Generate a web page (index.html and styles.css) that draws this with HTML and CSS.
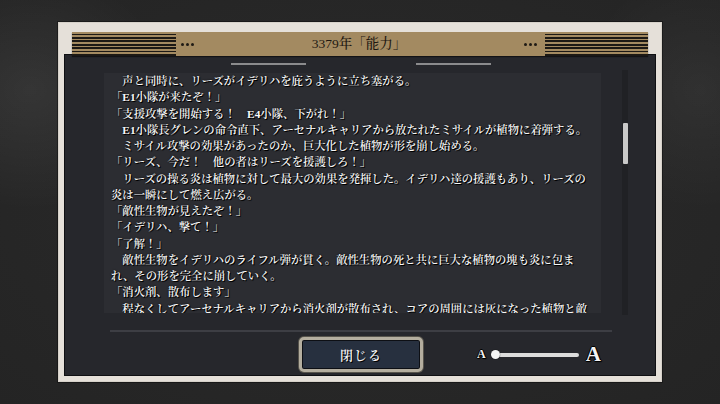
FILE: index.html
```html
<!DOCTYPE html>
<html lang="ja">
<head>
<meta charset="utf-8">
<title>ログ</title>
<link rel="stylesheet" href="styles.css">
</head>
<body>
<div class="frame">
  <header class="header">
    <div class="stripes"></div>
    <span class="dots dots-left"><i></i><i></i><i></i></span>
    <h1 class="title">3379年「能力」</h1>
    <span class="dots dots-right"><i></i><i></i><i></i></span>
    <div class="stripes stripes-right"></div>
  </header>
  <section class="panel">
    <div class="tabs"><span class="tab-line"></span><span class="tab-line tab-line-2"></span></div>
    <div class="log-row">
      <div class="log">
        <p>　声と同時に、リーズがイデリハを庇うように立ち塞がる。</p>
        <p>「E1小隊が来たぞ！」</p>
        <p>「支援攻撃を開始する！　E4小隊、下がれ！」</p>
        <p>　E1小隊長グレンの命令直下、アーセナルキャリアから放たれたミサイルが植物に着弾する。</p>
        <p>　ミサイル攻撃の効果があったのか、巨大化した植物が形を崩し始める。</p>
        <p>「リーズ、今だ！　他の者はリーズを援護しろ！」</p>
        <p>　リーズの操る炎は植物に対して最大の効果を発揮した。イデリハ達の援護もあり、リーズの炎は一瞬にして燃え広がる。</p>
        <p>「敵性生物が見えたぞ！」</p>
        <p>「イデリハ、撃て！」</p>
        <p>「了解！」</p>
        <p>　敵性生物をイデリハのライフル弾が貫く。敵性生物の死と共に巨大な植物の塊も炎に包まれ、その形を完全に崩していく。</p>
        <p>「消火剤、散布します」</p>
        <p>　程なくしてアーセナルキャリアから消火剤が散布され、コアの周囲には灰になった植物と敵</p>
      </div>
      <div class="scrollbar"><div class="thumb"></div></div>
    </div>
    <div class="separator"></div>
    <div class="controls">
      <button class="close" type="button">閉じる</button>
      <div class="font-size">
        <span class="a-small">A</span>
        <span class="knob"></span>
        <span class="track"></span>
        <span class="a-large">A</span>
      </div>
    </div>
  </section>
</div>
</body>
</html>
```

FILE: styles.css
```css
* { box-sizing: border-box; }
html, body { margin: 0; padding: 0; }
body {
  width: 720px;
  height: 404px;
  overflow: hidden;
  background:
    radial-gradient(ellipse 140px 120px at 30px 90px, rgba(255,255,255,0.07), rgba(255,255,255,0) 100%),
    radial-gradient(ellipse 120px 120px at 700px 90px, rgba(255,255,255,0.05), rgba(255,255,255,0) 100%),
    radial-gradient(ellipse 500px 300px at 360px 200px, #2b2b2b, #242424);
  font-family: "Liberation Serif", "Noto Serif CJK JP", "Noto Sans CJK JP", serif;
  padding-top: 22px;
}
.frame {
  width: 604px;
  height: 360px;
  margin-left: 58px;
  padding: 10px 5px 5px;
  background: #e5e0d9;
  border: 1px solid #d6d1c9;
  box-shadow: 0 0 0 1px rgba(0,0,0,0.35);
  display: flex;
  flex-direction: column;
}
.header {
  position: relative;
  z-index: 1;
  margin: -1px 8px -2px;
  height: 24px;
  background: #a38a61;
  display: flex;
  align-items: center;
  box-shadow: 0 1px 1px rgba(0,0,0,0.5);
}
.stripes {
  width: 104px;
  height: 24px;
  background: repeating-linear-gradient(to bottom, #a38a61 0, #a38a61 1.6px, #1c1915 1.6px, #1c1915 3.4px);
}
.stripes-right { width: 103px; }
.dots { display: flex; gap: 2px; }
.dots i {
  width: 3px;
  height: 3px;
  border-radius: 50%;
  background: #1e1a14;
}
.dots-left { margin-left: 5px; }
.dots-right { margin-right: 8px; }
.title {
  flex: 1;
  margin: 0;
  text-align: center;
  font-size: 13.5px;
  font-weight: 500;
  color: #1e1811;
  line-height: 24px;
}
.panel {
  flex: 1;
  background: #26272c;
  box-shadow: inset 0 0 0 1px #0f1013;
  padding-left: 40px;
  display: flex;
  flex-direction: column;
}
.tabs {
  display: flex;
  margin-top: 9px;
  height: 2px;
}
.tab-line {
  width: 75px;
  height: 2px;
  background: #8b8b8d;
  margin-left: 127px;
}
.tab-line-2 { margin-left: 110px; }
.log-row {
  display: flex;
  margin-top: 8px;
  height: 240px;
}
.log {
  width: 497px;
  height: 240px;
  overflow: hidden;
  background: #2c2d32;
  padding: 0 8px 0 7px;
  color: #f7f7f7;
  font-size: 11.35px;
  font-weight: 600;
  line-height: 16.25px;
  text-shadow: 1px 1px 0 #000, 0 0 2px #000;
}
.log p {
  margin: 0;
  width: 482px;
}
.scrollbar {
  margin-left: 21px;
  margin-top: -3px;
  width: 6px;
  height: 245px;
  background: #202125;
  padding-top: 53px;
  display: flex;
  justify-content: center;
}
.thumb {
  width: 5px;
  height: 41px;
  background: #c9c9c9;
  border-radius: 1px;
}
.separator {
  margin-top: 17px;
  margin-left: 6px;
  width: 502px;
  height: 2px;
  background: #3d3e44;
}
.controls {
  margin-top: 5px;
  height: 35px;
  display: flex;
  align-items: center;
}
.close {
  margin-left: 195px;
  width: 124px;
  height: 35px;
  padding: 0;
  border: 3px solid #b4ae9f;
  border-radius: 5px;
  background: #27303f;
  box-shadow: inset 0 0 0 1px #0d0f14, 0 0 0 1px #57544c;
  color: #f3f3f3;
  font-family: "Noto Serif CJK JP", "Noto Sans CJK JP", serif;
  font-weight: 600;
  font-size: 13px;
  letter-spacing: 1px;
  text-shadow: 1px 1px 0 #000;
}
.font-size {
  margin-left: 54px;
  display: flex;
  align-items: center;
}
.a-small, .a-large {
  font-family: "Liberation Serif", serif;
  font-weight: bold;
  color: #f4f4f4;
  text-shadow: 1px 0 0 #000, -1px 0 0 #000, 0 1px 0 #000, 0 -1px 0 #000, 1px 1px 1px #000;
}
.a-small { font-size: 12px; }
.a-large { font-size: 21px; margin-left: 7px; }
.knob {
  margin-left: 5px;
  width: 9px;
  height: 9px;
  border-radius: 50%;
  background: #f4f4f4;
  box-shadow: 0 0 1px #000;
  position: relative;
  z-index: 1;
}
.track {
  margin-left: -4px;
  width: 83px;
  height: 4px;
  background: #dcdcdc;
  border-radius: 2px;
}
```
